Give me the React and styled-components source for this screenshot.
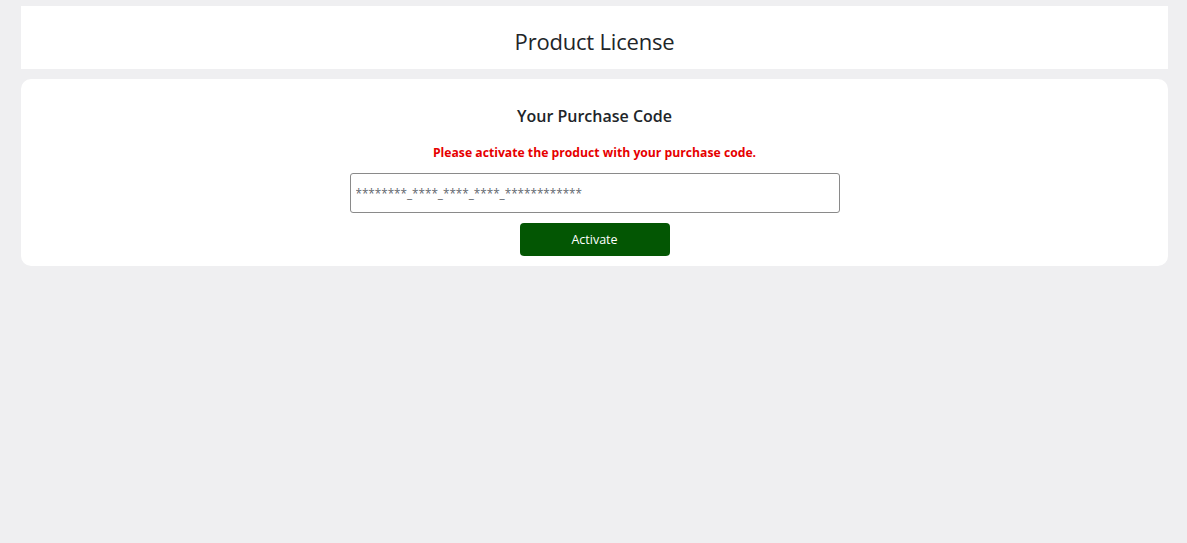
import React from "react";
import styled, { createGlobalStyle } from "styled-components";

const Global = createGlobalStyle`
  html, body { margin: 0; padding: 0; background: #efeff1; }
  body { font-family: "Open Sans", "Noto Sans", sans-serif; color: #212529; }
  * { box-sizing: border-box; }
`;

const Page = styled.div`
  min-height: 543px;
  padding: 6px 19px 0 21px;
  display: flex;
  flex-direction: column;
  gap: 10px;
`;

const Header = styled.header`
  background: #fff;
  height: 63px;
  padding-top: 6px;
  display: flex;
  align-items: center;
  justify-content: center;
`;

const Title = styled.h1`
  margin: 0;
  font-size: 22px;
  font-weight: 400;
  color: #212529;
  letter-spacing: -0.2px;
`;

const Card = styled.section`
  background: #fff;
  border-radius: 10px;
  padding: 26px 0 10px;
  display: flex;
  flex-direction: column;
  align-items: center;
`;

const CardTitle = styled.h2`
  margin: 0;
  font-size: 16px;
  font-weight: 600;
  color: #212529;
  line-height: 22px;
`;

const Notice = styled.p`
  margin: 18px 0 0;
  font-size: 12.2px;
  font-weight: 700;
  color: #e60000;
  line-height: 16px;
`;

const Input = styled.input`
  margin-top: 12px;
  width: 490px;
  height: 40px;
  border: 1px solid #8a8a8a;
  border-radius: 3px;
  padding: 0 5px;
  font-family: "Open Sans", sans-serif;
  font-size: 11.7px;
  color: #212529;
  outline: none;
  &::placeholder { color: #5f666d; opacity: 1; }
`;

const Button = styled.button`
  margin-top: 10px;
  width: 150px;
  height: 33px;
  border: none;
  border-radius: 4px;
  background: #035603;
  color: #fff;
  font-family: "Open Sans", sans-serif;
  font-size: 12.5px;
  cursor: pointer;
`;

export default function App() {
  return (
    <>
      <Global />
      <Page>
        <Header>
          <Title>Product License</Title>
        </Header>
        <Card>
          <CardTitle>Your Purchase Code</CardTitle>
          <Notice>Please activate the product with your purchase code.</Notice>
          <Input placeholder="********_****_****_****_************" />
          <Button>Activate</Button>
        </Card>
      </Page>
    </>
  );
}
